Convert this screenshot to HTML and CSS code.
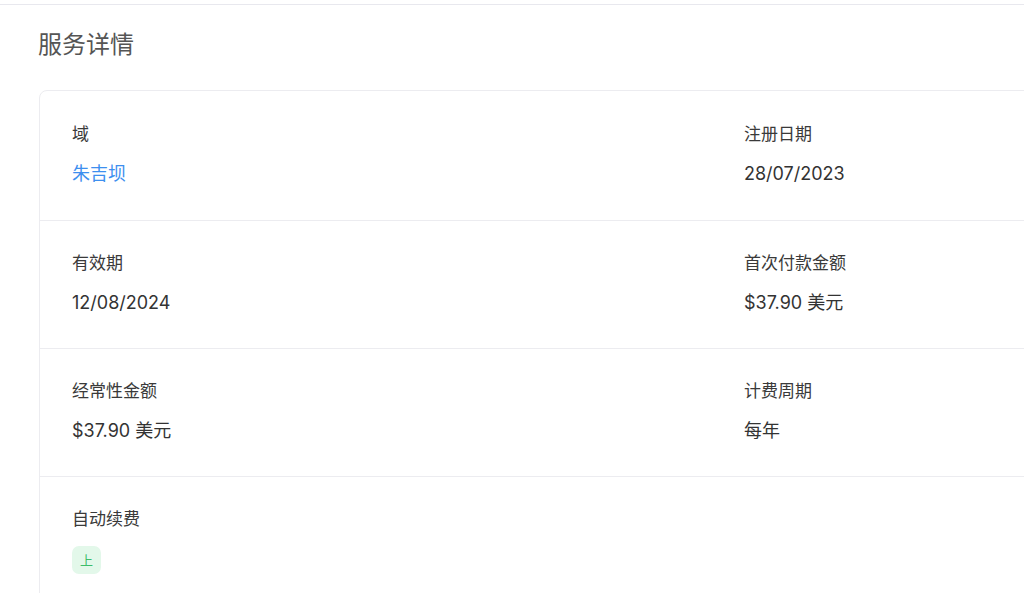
FILE: index.html
```html
<!DOCTYPE html>
<html lang="zh">
<head>
<meta charset="utf-8">
<link rel="stylesheet" href="styles.css">
</head>
<body>
<div class="topbar"></div>
<main class="page">
  <h1 class="title">服务详情</h1>
  <section class="card">
    <div class="row">
      <div class="cell"><div class="label">域</div><div class="value link">朱吉坝</div></div>
      <div class="cell"><div class="label">注册日期</div><div class="value">28/07/2023</div></div>
    </div>
    <div class="row">
      <div class="cell"><div class="label">有效期</div><div class="value">12/08/2024</div></div>
      <div class="cell"><div class="label">首次付款金额</div><div class="value">$37.90 美元</div></div>
    </div>
    <div class="row">
      <div class="cell"><div class="label">经常性金额</div><div class="value">$37.90 美元</div></div>
      <div class="cell"><div class="label">计费周期</div><div class="value">每年</div></div>
    </div>
    <div class="row">
      <div class="cell"><div class="label">自动续费</div><div class="value"><span class="badge">上</span></div></div>
      <div class="cell"></div>
    </div>
  </section>
</main>
</body>
</html>
```

FILE: styles.css
```css
html, body {
  margin: 0;
  padding: 0;
  background: #fff;
  overflow: hidden;
  height: 593px;
}
body {
  font-family: Inter, "Noto Sans CJK SC", sans-serif;
  color: #333;
}
.topbar {
  height: 4px;
  border-bottom: 1px solid #e8e8ee;
}
.page {
  padding: 0 0 0 39px;
  width: 1500px;
}
.title {
  margin: 0 0 0 -1px;
  padding-top: 25px;
  font-size: 24px;
  line-height: 30px;
  font-weight: 400;
  color: #555;
}
.card {
  margin-top: 30px;
  border: 1px solid #ececf0;
  border-radius: 8px;
  width: 1408px;
}
.row {
  display: grid;
  grid-template-columns: 672px 672px;
  padding: 30px 32px 32px;
  border-top: 1px solid #ececf0;
}
.row:first-child {
  border-top: none;
  padding-top: 31px;
  padding-bottom: 33px;
}
.label {
  font-size: 17px;
  line-height: 24px;
  color: #3a3a3a;
}
.value {
  margin-top: 15px;
  font-size: 18px;
  line-height: 26px;
  height: 26px;
  color: #333;
}
.link {
  color: #3d8fef;
}
.badge {
  display: flex;
  align-items: center;
  justify-content: center;
  width: 29px;
  height: 28px;
  border-radius: 7px;
  background: #e3f8ea;
  color: #3dbd6a;
  font-size: 13px;
}
```
